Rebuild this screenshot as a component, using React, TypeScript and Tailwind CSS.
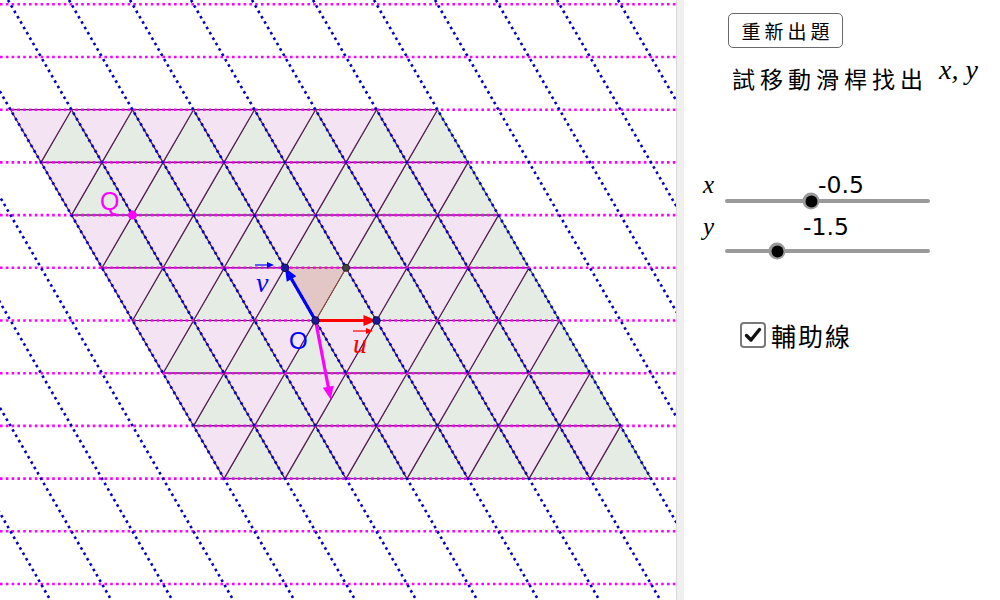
import React from "react";

const O = { x: 315.5, y: 320.5 };
const U = 61;
const HU = 30.5;
const H = 52.7;
const P = (a: number, b: number): [number, number] => [O.x + U * a - HU * b, O.y - H * b];
const pts = (arr: [number, number][]) => arr.map((p) => `${p[0]},${p[1]}`).join(" ");

function Arrow({ x1, y1, x2, y2, color }: { x1: number; y1: number; x2: number; y2: number; color: string }) {
  const dx = x2 - x1;
  const dy = y2 - y1;
  const len = Math.hypot(dx, dy);
  const ux = dx / len;
  const uy = dy / len;
  const hl = 13;
  const hw = 5.5;
  const bx = x2 - ux * hl;
  const by = y2 - uy * hl;
  const p1: [number, number] = [bx - uy * hw, by + ux * hw];
  const p2: [number, number] = [bx + uy * hw, by - ux * hw];
  return (
    <g>
      <line x1={x1} y1={y1} x2={bx + ux * 2} y2={by + uy * 2} stroke={color} strokeWidth={3.2} />
      <polygon points={pts([[x2, y2], p1, p2])} fill={color} />
    </g>
  );
}

function Graphics() {
  const greens: React.ReactNode[] = [];
  const lavs: React.ReactNode[] = [];
  for (let b = -3; b <= 3; b++) {
    for (let a = -3; a <= 3; a++) {
      greens.push(
        <polygon
          key={`g${a}_${b}`}
          points={pts([P(a, b), P(a + 1, b), P(a + 1, b + 1)])}
          fill="#e5ece3"
          stroke="#3d5a50"
          strokeWidth={1.2}
        />
      );
      lavs.push(
        <polygon
          key={`l${a}_${b}`}
          points={pts([P(a, b), P(a + 1, b + 1), P(a, b + 1)])}
          fill="#f3e3f3"
          stroke="#5a1d55"
          strokeWidth={1.2}
        />
      );
    }
  }

  const hLines: React.ReactNode[] = [];
  for (let b = -6; b <= 6; b++) {
    const y = O.y - H * b;
    hLines.push(
      <line key={`h${b}`} x1={0} y1={y} x2={676} y2={y} stroke="#ff00ff" strokeWidth={2.6} strokeDasharray="2.6 3.2" />
    );
  }
  const dLines: React.ReactNode[] = [];
  const k = HU / H;
  for (let a = -12; a <= 15; a++) {
    const x0 = O.x + U * a - O.y * k;
    const x1 = O.x + U * a + (600 - O.y) * k;
    dLines.push(
      <line key={`d${a}`} x1={x0} y1={0} x2={x1} y2={600} stroke="#0000c8" strokeWidth={2.6} strokeDasharray="2.6 3.6" />
    );
  }

  const uEnd = P(1, 0);
  const vEnd = P(0, 1);
  const w = P(1, 1);
  const q = P(-2, 2);
  const m: [number, number] = [O.x - 0.5 * U + 1.5 * HU, O.y + 1.5 * H];

  return (
    <svg width={676} height={600} viewBox="0 0 676 600" className="block shrink-0">
      <rect x={0} y={0} width={676} height={600} fill="#ffffff" />
      {greens}
      {lavs}
      <polygon points={pts([P(0, 0), P(1, 1), P(0, 1)])} fill="#e3c6c6" stroke="#8a4a3a" strokeWidth={1} />
      {hLines}
      {dLines}
      <Arrow x1={O.x} y1={O.y} x2={uEnd[0]} y2={uEnd[1]} color="#ff0000" />
      <Arrow x1={O.x} y1={O.y} x2={vEnd[0]} y2={vEnd[1]} color="#0000ff" />
      <Arrow x1={O.x} y1={O.y} x2={m[0]} y2={m[1]} color="#ff00ff" />
      <circle cx={w[0]} cy={w[1]} r={3.5} fill="#444444" stroke="#222222" strokeWidth={1} />
      <circle cx={O.x} cy={O.y} r={3.8} fill="#1a1aa0" stroke="#101040" strokeWidth={1} />
      <circle cx={uEnd[0]} cy={uEnd[1]} r={3.8} fill="#1a1aa0" stroke="#101040" strokeWidth={1} />
      <circle cx={vEnd[0]} cy={vEnd[1]} r={3.8} fill="#1a1aa0" stroke="#101040" strokeWidth={1} />
      <circle cx={q[0]} cy={q[1]} r={4.5} fill="#ff00ff" />
      <text x={100} y={210} fontFamily="'Liberation Sans', Arial, sans-serif" fontSize={25} fill="#ff00ff">
        Q
      </text>
      <text x={289} y={349} fontFamily="'Liberation Sans', Arial, sans-serif" fontSize={24} fill="#0000ff">
        O
      </text>
      <text x={353} y={353} fontFamily="'Liberation Serif', 'Times New Roman', serif" fontStyle="italic" fontSize={28} fill="#ff0000">
        u
      </text>
      <line x1={353} y1={331} x2={368} y2={331} stroke="#ff0000" strokeWidth={1.2} />
      <polygon points="373,331 366,328 366,334" fill="#ff0000" />
      <text x={256} y={292} fontFamily="'Liberation Serif', 'Times New Roman', serif" fontStyle="italic" fontSize={28} fill="#0000ff">
        v
      </text>
      <line x1={255} y1={265} x2={268} y2={265} stroke="#0000ff" strokeWidth={1.2} />
      <polygon points="274,265 267,262 267,268" fill="#0000ff" />
    </svg>
  );
}

export default function App() {
  return (
    <div className="flex w-[1000px] h-[600px] bg-white overflow-hidden">
      <Graphics />
      <div className="w-[8px] shrink-0 bg-[#efefef] border-l border-[#d9d9d9]" />
      <div className="flex-1 flex flex-col text-black">
        <button className="ml-[44px] mt-[13px] w-[115px] h-[35px] border border-[#6a6a6a] rounded-[5px] bg-white flex items-center justify-center font-['Noto_Sans_CJK_TC','Noto_Sans_CJK_SC',sans-serif] text-[19px] leading-none tracking-[4px] pl-[4px]">
          重新出題
        </button>
        <div className="ml-[48px] mt-[17px] h-[26px] flex items-baseline whitespace-nowrap">
          <span className="font-['Noto_Sans_CJK_TC','Noto_Sans_CJK_SC',sans-serif] text-[23px] leading-[26px] tracking-[5px]">
            試移動滑桿找出
          </span>
          <span className="ml-[11px] font-['Liberation_Serif',serif] italic text-[28px] leading-[26px] relative -top-[9px]">
            x, y
          </span>
        </div>
        <div className="ml-[19px] mt-[80px] flex flex-col">
          <div className="flex items-baseline h-[28px] leading-[28px]">
            <span className="w-[22px] font-['Liberation_Serif',serif] italic text-[25px]">x</span>
            <span className="ml-[93px] font-['DejaVu_Sans',sans-serif] text-[23.5px]">-0.5</span>
          </div>
          <div className="relative ml-[22px] w-[205px] h-[4px] rounded-full bg-[#9a9a9a]">
            <div className="absolute left-[86px] top-1/2 -translate-x-1/2 -translate-y-1/2 w-[17px] h-[17px] rounded-full bg-[#9a9a9a] flex items-center justify-center">
              <div className="w-[12px] h-[12px] rounded-full bg-black" />
            </div>
          </div>
          <div className="mt-[10px] flex items-baseline h-[28px] leading-[28px]">
            <span className="w-[22px] font-['Liberation_Serif',serif] italic text-[25px]">y</span>
            <span className="ml-[78px] font-['DejaVu_Sans',sans-serif] text-[23.5px]">-1.5</span>
          </div>
          <div className="relative mt-[8px] ml-[22px] w-[205px] h-[4px] rounded-full bg-[#9a9a9a]">
            <div className="absolute left-[52px] top-1/2 -translate-x-1/2 -translate-y-1/2 w-[17px] h-[17px] rounded-full bg-[#9a9a9a] flex items-center justify-center">
              <div className="w-[12px] h-[12px] rounded-full bg-black" />
            </div>
          </div>
        </div>
        <div className="ml-[56px] mt-[68px] flex items-center gap-[5px]">
          <div className="w-[26px] h-[26px] rounded-[4px] border-2 border-[#7a7a7a] bg-white flex items-center justify-center">
            <svg width="20" height="20" viewBox="0 0 20 20">
              <polyline points="3.5,10.5 8,15 16.5,4.5" fill="none" stroke="#111" strokeWidth="3.4" strokeLinecap="round" strokeLinejoin="round" />
            </svg>
          </div>
          <span className="font-['Noto_Sans_CJK_TC','Noto_Sans_CJK_SC',sans-serif] text-[25px] leading-[28px] tracking-[2px]">
            輔助線
          </span>
        </div>
      </div>
    </div>
  );
}
